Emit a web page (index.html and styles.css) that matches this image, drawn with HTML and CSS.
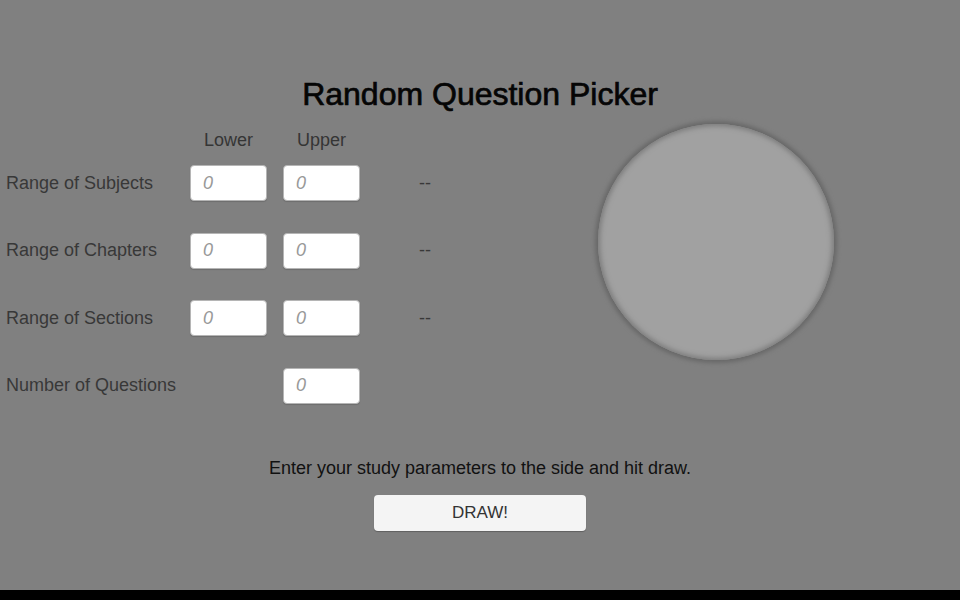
FILE: index.html
```html
<!DOCTYPE html>
<html lang="en">
<head>
<meta charset="utf-8">
<title>Random Question Picker</title>
<link rel="stylesheet" href="styles.css">
</head>
<body>
<div class="app">
  <h1 class="title">Random Question Picker</h1>
  <div class="main">
    <div class="form">
      <div class="heads">
        <span class="head">Lower</span>
        <span class="head">Upper</span>
      </div>
      <div class="grid">
        <span class="label">Range of Subjects</span>
        <input class="field" type="text" placeholder="0">
        <input class="field" type="text" placeholder="0">
        <span class="dash">--</span>

        <span class="label">Range of Chapters</span>
        <input class="field" type="text" placeholder="0">
        <input class="field" type="text" placeholder="0">
        <span class="dash">--</span>

        <span class="label">Range of Sections</span>
        <input class="field" type="text" placeholder="0">
        <input class="field" type="text" placeholder="0">
        <span class="dash">--</span>

        <span class="label">Number of Questions</span>
        <span class="empty"></span>
        <input class="field" type="text" placeholder="0">
        <span class="empty"></span>
      </div>
    </div>
    <div class="ball"></div>
  </div>
  <p class="message">Enter your study parameters to the side and hit draw.</p>
  <button class="draw" type="button">DRAW!</button>
</div>
</body>
</html>
```

FILE: styles.css
```css
html, body {
  margin: 0;
  padding: 0;
  background: #000;
}

body {
  width: 960px;
  height: 600px;
  overflow: hidden;
  font-family: "Liberation Sans", Arial, sans-serif;
}

.app {
  width: 960px;
  height: 590px;
  background: #808080;
  display: flex;
  flex-direction: column;
  align-items: center;
  box-sizing: border-box;
  padding-top: 75px;
}

.title {
  margin: 0;
  font-size: 32px;
  line-height: 38px;
  font-weight: normal;
  color: #050505;
  -webkit-text-stroke: 0.7px #050505;
}

.main {
  align-self: stretch;
  display: flex;
  align-items: flex-start;
  margin-top: 11px;
}

.form {
  padding-top: 6px;
  padding-left: 6px;
}

.heads {
  display: flex;
  padding-left: 184px;
  gap: 16px;
  margin-bottom: 15px;
}

.head {
  width: 77px;
  text-align: center;
  font-size: 18px;
  line-height: 20px;
  color: #353535;
}

.grid {
  display: grid;
  grid-template-columns: 168px 77px 77px 72px;
  grid-auto-rows: 36px;
  column-gap: 16px;
  row-gap: 31.5px;
  align-items: center;
}

.label {
  font-size: 18px;
  color: #383838;
  white-space: nowrap;
}

.field {
  box-sizing: border-box;
  width: 77px;
  height: 36px;
  margin: 0;
  border: 1px solid #b5b5b5;
  border-radius: 4px;
  background: #fff;
  padding: 0 0 0 12px;
  font-family: "Liberation Sans", Arial, sans-serif;
  font-size: 18px;
  box-shadow: 0 1px 1px rgba(0, 0, 0, 0.15);
}

.field::placeholder {
  color: #999;
  font-style: italic;
}

.dash {
  font-size: 18px;
  color: #383838;
  padding-left: 43px;
}

.ball {
  margin-left: auto;
  margin-right: 126px;
  width: 236px;
  height: 236px;
  border-radius: 50%;
  background: #a1a1a1;
  box-shadow: 0 0 4px 3px #686868, inset 0 0 5px 2px #7c7c7c;
}

.message {
  margin: 54px 0 0;
  font-size: 18px;
  line-height: 20px;
  color: #111;
}

.draw {
  margin-top: 17px;
  width: 212px;
  height: 36px;
  border: none;
  border-radius: 4px;
  background: #f4f4f4;
  font-family: "Liberation Sans", Arial, sans-serif;
  font-size: 17px;
  color: #333;
  box-shadow: 0 1px 1px rgba(0, 0, 0, 0.25);
  padding: 0;
}
```
